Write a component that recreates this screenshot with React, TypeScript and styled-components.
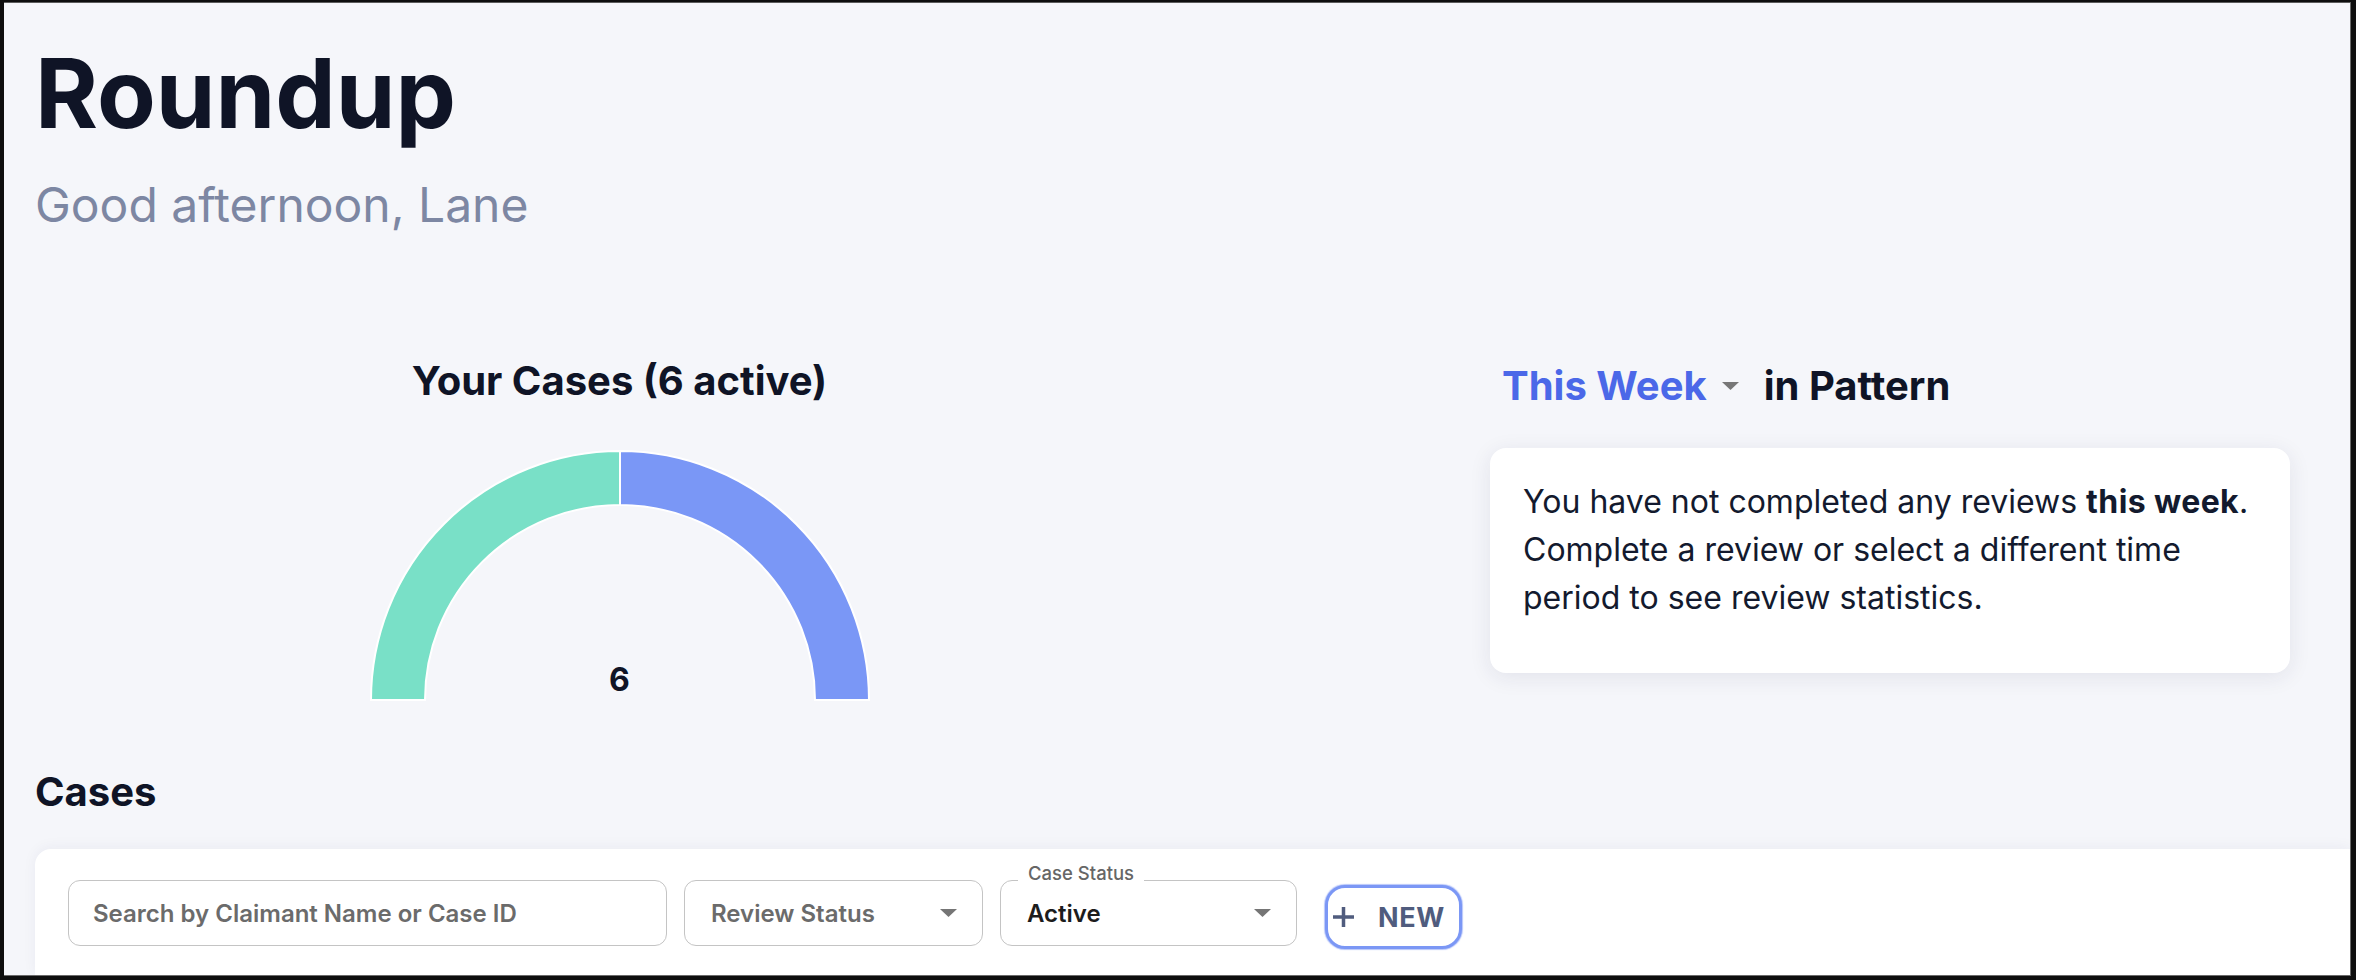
import React from 'react'
import styled, { createGlobalStyle } from 'styled-components'

const GlobalStyle = createGlobalStyle`
  html, body {
    margin: 0;
    padding: 0;
    background: #0e0e0e;
  }
  body {
    font-family: Inter, "Noto Sans", sans-serif;
  }
  * {
    box-sizing: border-box;
  }
`

const Frame = styled.div`
  width: 2356px;
  height: 980px;
  padding: 2px 5px 4px 4px;
  background: #0e0e0e;
`

const Screen = styled.main`
  height: 100%;
  display: flex;
  flex-direction: column;
  overflow: hidden;
  background: #f5f6fa;
  border-top: 1px solid #5c5c5c;
  border-right: 1px solid #6a6a6a;
  border-bottom: 1px solid #6a6a6a;
  padding: 32px 0 0 31px;
`

const Title = styled.h1`
  margin: 0;
  font-size: 96px;
  font-weight: 700;
  line-height: normal;
  color: #0f1426;
`

const Greeting = styled.p`
  margin: 24px 0 0;
  font-size: 48px;
  font-weight: 400;
  line-height: normal;
  color: #7d87a3;
`

const Overview = styled.section`
  display: flex;
  align-items: flex-start;
  margin-top: 122px;
`

const ChartColumn = styled.div`
  width: 1169px;
  display: flex;
  flex-direction: column;
  align-items: center;
`

const Heading = styled.h2`
  margin: 0;
  font-size: 40px;
  font-weight: 700;
  line-height: normal;
  color: #0f1426;
`

const Gauge = styled.div`
  position: relative;
  margin-top: 46px;
  width: 500px;
  height: 249px;

  svg {
    display: block;
    overflow: visible;
  }
`

const GaugeValue = styled.span`
  position: absolute;
  left: 0;
  right: 0;
  bottom: 4px;
  text-align: center;
  font-size: 32px;
  line-height: 32px;
  font-weight: 700;
  color: #0f1426;
`

const StatsColumn = styled.div`
  width: 800px;
  margin-left: 286px;
  margin-top: 5px;
`

const PeriodHeading = styled(Heading)`
  display: flex;
  align-items: center;
  padding-left: 12px;
`

const PeriodPicker = styled.span`
  display: inline-flex;
  align-items: center;
  gap: 15px;
  margin-right: 25px;
  color: #4b68e8;
  cursor: pointer;
`

const StatsCard = styled.div`
  margin-top: 38px;
  background: #ffffff;
  border-radius: 16px;
  padding: 30px 26px 51px 33px;
  box-shadow: 0 4px 22px rgba(28, 38, 80, 0.09);
  font-size: 32px;
  line-height: 48px;
  color: #131a2e;

  strong {
    font-weight: 700;
    letter-spacing: 0.4px;
  }
`

const SectionTitle = styled(Heading)`
  margin-top: 67px;
`

const Panel = styled.section`
  flex: 1;
  margin-top: 33px;
  background: #ffffff;
  border-top-left-radius: 16px;
  padding: 31px 0 0 33px;
  box-shadow: 0 -2px 14px rgba(30, 40, 90, 0.05);
`

const Filters = styled.div`
  display: flex;
  align-items: flex-start;
  gap: 17px;
`

const SearchInput = styled.input`
  width: 599px;
  height: 66px;
  border: 1.5px solid #c4c4c4;
  border-radius: 12px;
  padding: 0 24px;
  font-family: Inter, "Noto Sans", sans-serif;
  font-size: 24px;
  font-weight: 600;
  color: #1c1c1c;
  background: #fff;
  outline: none;

  &::placeholder {
    color: #6b6b6b;
    opacity: 1;
  }
`

const Select = styled.div<{ $width: number }>`
  position: relative;
  width: ${p => p.$width}px;
  height: 66px;
  border: 1.5px solid #c4c4c4;
  border-radius: 12px;
  padding: 0 25px 0 26px;
  display: flex;
  align-items: center;
  justify-content: space-between;
  font-size: 24px;
  font-weight: 600;
  cursor: pointer;
`

const SelectText = styled.span<{ $placeholder?: boolean }>`
  color: ${p => (p.$placeholder ? '#6b6b6b' : '#1c1c1c')};
`

const FloatingLabel = styled.span`
  position: absolute;
  left: 17px;
  top: -19px;
  padding: 0 10px;
  background: #ffffff;
  font-size: 18.5px;
  line-height: 22px;
  font-weight: 500;
  color: #666666;
`

const NewButton = styled.button`
  margin-left: 11px;
  margin-top: 5px;
  width: 137px;
  height: 64px;
  display: flex;
  align-items: center;
  gap: 23px;
  padding: 0 0 0 4px;
  border: 3px solid #7b97f5;
  border-radius: 20px;
  box-shadow: 0 0 1px 1px rgba(123, 151, 245, 0.55);
  background: #ffffff;
  font-family: Inter, "Noto Sans", sans-serif;
  font-size: 27px;
  font-weight: 700;
  letter-spacing: 0.6px;
  color: #505c7e;
  cursor: pointer;
`

function Caret({ color = '#757575' }: { color?: string }) {
  return (
    <svg width="17" height="8" viewBox="0 0 17 8">
      <polygon points="0,0 17,0 8.5,8" fill={color} />
    </svg>
  )
}

function PlusIcon() {
  return (
    <svg width="23" height="22" viewBox="0 0 23 22">
      <path d="M11.5 1v20M1 11h21" stroke="#505c7e" strokeWidth="3.5" fill="none" />
    </svg>
  )
}

const R = 249
const r = 195
const CX = 250
const CY = 249

function CasesGauge({ total }: { total: number }) {
  const left = `M ${CX - R} ${CY} A ${R} ${R} 0 0 1 ${CX} ${CY - R} L ${CX} ${CY - r} A ${r} ${r} 0 0 0 ${CX - r} ${CY} Z`
  const right = `M ${CX} ${CY - R} A ${R} ${R} 0 0 1 ${CX + R} ${CY} L ${CX + r} ${CY} A ${r} ${r} 0 0 0 ${CX} ${CY - r} Z`
  return (
    <Gauge>
      <svg width="500" height="249" viewBox="0 0 500 249">
        <path d={left} fill="#79e0c7" stroke="#ffffff" strokeWidth="2" />
        <path d={right} fill="#7a97f6" stroke="#ffffff" strokeWidth="2" />
      </svg>
      <GaugeValue>{total}</GaugeValue>
    </Gauge>
  )
}

export default function App() {
  return (
    <Frame>
      <GlobalStyle />
      <Screen>
        <Title>Roundup</Title>
        <Greeting>Good afternoon, Lane</Greeting>

        <Overview>
          <ChartColumn>
            <Heading>Your Cases (6 active)</Heading>
            <CasesGauge total={6} />
          </ChartColumn>

          <StatsColumn>
            <PeriodHeading>
              <PeriodPicker>
                This Week
                <Caret color="#777777" />
              </PeriodPicker>
              in Pattern
            </PeriodHeading>
            <StatsCard>
              You have not completed any reviews <strong>this week</strong>. Complete a review or select a
              different time period to see review statistics.
            </StatsCard>
          </StatsColumn>
        </Overview>

        <SectionTitle>Cases</SectionTitle>

        <Panel>
          <Filters>
            <SearchInput placeholder="Search by Claimant Name or Case ID" />
            <Select $width={299}>
              <SelectText $placeholder>Review Status</SelectText>
              <Caret />
            </Select>
            <Select $width={297}>
              <FloatingLabel>Case Status</FloatingLabel>
              <SelectText>Active</SelectText>
              <Caret />
            </Select>
            <NewButton>
              <PlusIcon />
              NEW
            </NewButton>
          </Filters>
        </Panel>
      </Screen>
    </Frame>
  )
}
